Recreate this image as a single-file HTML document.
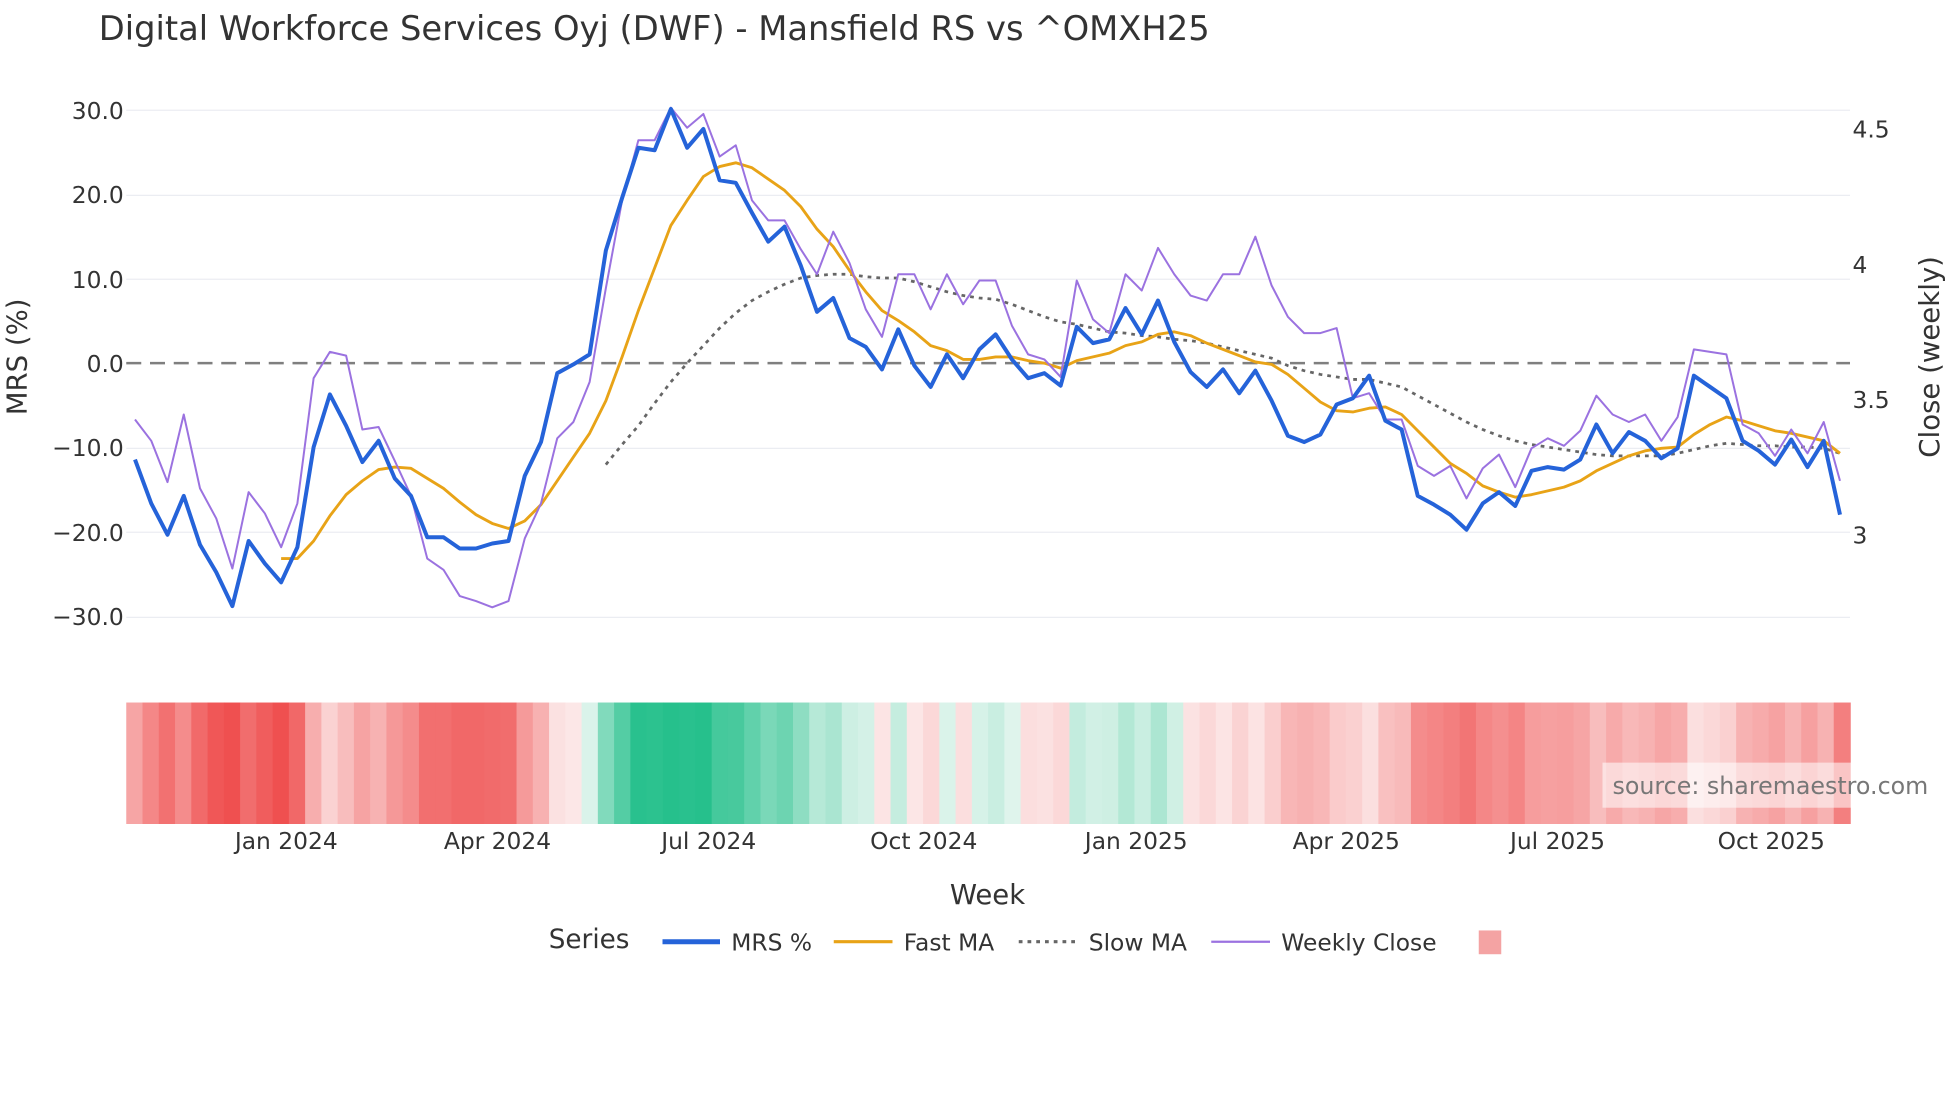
<!DOCTYPE html>
<html><head><meta charset="utf-8">
<style>
html,body{margin:0;padding:0;background:#fff;width:1960px;height:1102px;overflow:hidden}
svg{display:block}
text{font-family:"DejaVu Sans","Liberation Sans",sans-serif}
</style></head>
<body>
<svg id="s" width="1960" height="1102" viewBox="0 0 1568 880" preserveAspectRatio="none" xmlns="http://www.w3.org/2000/svg">
<rect width="1568" height="880" fill="#fff"/>
<text x="79" y="32" font-size="27" fill="#333">Digital Workforce Services Oyj (DWF) - Mansfield RS vs ^OMXH25</text>
<g stroke="#ebedf2" stroke-width="1">
<line x1="101" x2="1480" y1="88" y2="88"/><line x1="101" x2="1480" y1="156" y2="156"/>
<line x1="101" x2="1480" y1="223" y2="223"/><line x1="101" x2="1480" y1="358" y2="358"/>
<line x1="101" x2="1480" y1="425" y2="425"/><line x1="101" x2="1480" y1="493" y2="493"/>
</g>
<line x1="101" x2="1480" y1="290" y2="290" stroke="#7f7f7f" stroke-width="2" stroke-dasharray="12,7"/>
<g font-size="18.7" fill="#333" text-anchor="end">
<text x="99" y="95">30.0</text><text x="99" y="162">20.0</text><text x="99" y="230">10.0</text>
<text x="99" y="297">0.0</text><text x="99" y="364">−10.0</text><text x="99" y="432">−20.0</text><text x="99" y="499">−30.0</text>
</g>
<g font-size="18.7" fill="#333">
<text x="1482" y="110">4.5</text><text x="1482" y="218">4</text><text x="1482" y="326">3.5</text><text x="1482" y="434">3</text>
</g>
<text transform="translate(21,285) rotate(-90)" font-size="22" text-anchor="middle" fill="#333">MRS (%)</text>
<text transform="translate(1551,285) rotate(-90)" font-size="22" text-anchor="middle" fill="#333">Close (weekly)</text>
<g id="heat"></g>
<g id="lines"></g>
<rect x="1282" y="609" width="286" height="36" fill="#fff" fill-opacity="0.55"/>
<text x="1290" y="634" font-size="19" fill="#777">source: sharemaestro.com</text>
<g font-size="18.7" fill="#333" text-anchor="middle">
<text x="229" y="678">Jan 2024</text><text x="398" y="678">Apr 2024</text><text x="567" y="678">Jul 2024</text>
<text x="739" y="678">Oct 2024</text><text x="909" y="678">Jan 2025</text><text x="1077" y="678">Apr 2025</text>
<text x="1246" y="678">Jul 2025</text><text x="1417" y="678">Oct 2025</text>
</g>
<text x="790" y="722" font-size="22" text-anchor="middle" fill="#333">Week</text>
<text x="439" y="757" font-size="21" fill="#333">Series</text>
<line x1="530" x2="576" y1="752" y2="752" stroke="#2563d9" stroke-width="4"/>
<text x="585" y="759" font-size="18.7" fill="#333">MRS %</text>
<line x1="667" x2="714" y1="752" y2="752" stroke="#e8a317" stroke-width="2.5"/>
<text x="723" y="759" font-size="18.7" fill="#333">Fast MA</text>
<line x1="815" x2="860" y1="752" y2="752" stroke="#666" stroke-width="2.5" stroke-dasharray="3,4"/>
<text x="871" y="759" font-size="18.7" fill="#333">Slow MA</text>
<line x1="969" x2="1016" y1="752" y2="752" stroke="#9b72e0" stroke-width="1.8"/>
<text x="1025" y="759" font-size="18.7" fill="#333">Weekly Close</text>
<rect x="1183" y="743" width="18" height="19" fill="#f4a3a3"/>
</svg>
<script>
var mrs=[367,402,427,396,435,457,484,432,450,465,437,357,315,340,369,352,382,396,429,429,438,438,434,432,380,353,298,291,283,200,158,118,120,87,118,103,144,146,170,193,181,212,249,238,270,277,295,263,292,309,283,302,279,267,287,302,298,308,261,274,271,246,267,240,273,297,309,295,314,296,320,348,353,347,323,318,300,336,343,396,403,411,423,402,393,404,376,373,375,367,339,362,345,352,366,358,300,309,318,352,360,371,351,373,352,411];
var wc=[335,352,385,331,390,414,454,393,410,437,402,302,281,284,343,341,368,396,446,455,476,480,485,480,430,402,350,337,305,230,160,112,112,86,102,91,125,116,160,176,176,199,219,185,210,247,269,219,219,247,219,243,224,224,260,283,287,301,224,255,266,219,232,198,219,236,240,219,219,189,228,253,266,266,262,318,314,335,335,372,380,372,398,374,363,389,358,350,356,344,316,331,337,331,352,333,279,281,283,339,346,364,343,362,337,384];
var fast=[446,446,432,412,395,384,375,373,374,382,390,401,411,418,422,416,403,384,365,346,320,285,248,214,180,160,141,133,130,134,143,152,165,183,197,216,233,248,256,265,276,280,287,287,285,285,288,290,294,288,285,282,276,273,267,265,268,274,279,284,289,291,299,310,321,328,329,326,325,331,344,357,370,378,388,393,397,395,392,389,384,376,370,364,360,358,357,347,339,333,336,340,344,346,349,352,362];
var slow=[371,355,340,322,305,290,276,262,250,240,233,227,222,220,219,219,221,222,222,225,229,233,236,238,239,243,248,253,257,259,262,265,266,268,269,271,272,274,277,280,283,286,292,296,299,301,303,303,306,309,316,323,330,337,343,348,352,355,357,359,361,363,364,364,364,364,362,359,356,354,355,356,356,357,357,358,362];
var N=mrs.length, x0=108, x1=1472, dx=(x1-x0)/(N-1);
function X(i){return x0+i*dx}
function path(arr,start){var d='';for(var i=0;i<arr.length;i++){var xi=X(start+i);d+=(i?'L':'M')+xi.toFixed(1)+' '+arr[i];}return d;}
var ns='http://www.w3.org/2000/svg';
var heat=document.getElementById('heat'),lines=document.getElementById('lines');
var cw=(1480-101)/N;
for(var i=0;i<N;i++){
 var v=(290-mrs[i])/6.74, c;
 var t=Math.min(Math.abs(v)/26,1);
 if(v<0){c=[Math.round(252+(239-252)*t),Math.round(232+(80-232)*t),Math.round(232+(80-232)*t)];}
 else{c=[Math.round(226+(38-226)*t),Math.round(245+(192-245)*t),Math.round(238+(140-238)*t)];}
 var r=document.createElementNS(ns,'rect');
 r.setAttribute('x',(101+i*cw).toFixed(2));r.setAttribute('y',561);
 r.setAttribute('width',(cw+0.6).toFixed(2));r.setAttribute('height',97);
 r.setAttribute('fill','rgb('+c.join(',')+')');heat.appendChild(r);
}
function addPath(d,stroke,w,dash){var p=document.createElementNS(ns,'path');p.setAttribute('d',d);p.setAttribute('fill','none');p.setAttribute('stroke',stroke);p.setAttribute('stroke-width',w);p.setAttribute('stroke-linejoin','round');if(dash)p.setAttribute('stroke-dasharray',dash);lines.appendChild(p);}
addPath(path(slow,N-slow.length),'#666',2.2,'3,4');
addPath(path(fast,N-fast.length),'#e8a317',2.3);
addPath(path(wc,0),'#9b72e0',1.6);
addPath(path(mrs,0),'#2563d9',3.2);
</script>
</body></html>
